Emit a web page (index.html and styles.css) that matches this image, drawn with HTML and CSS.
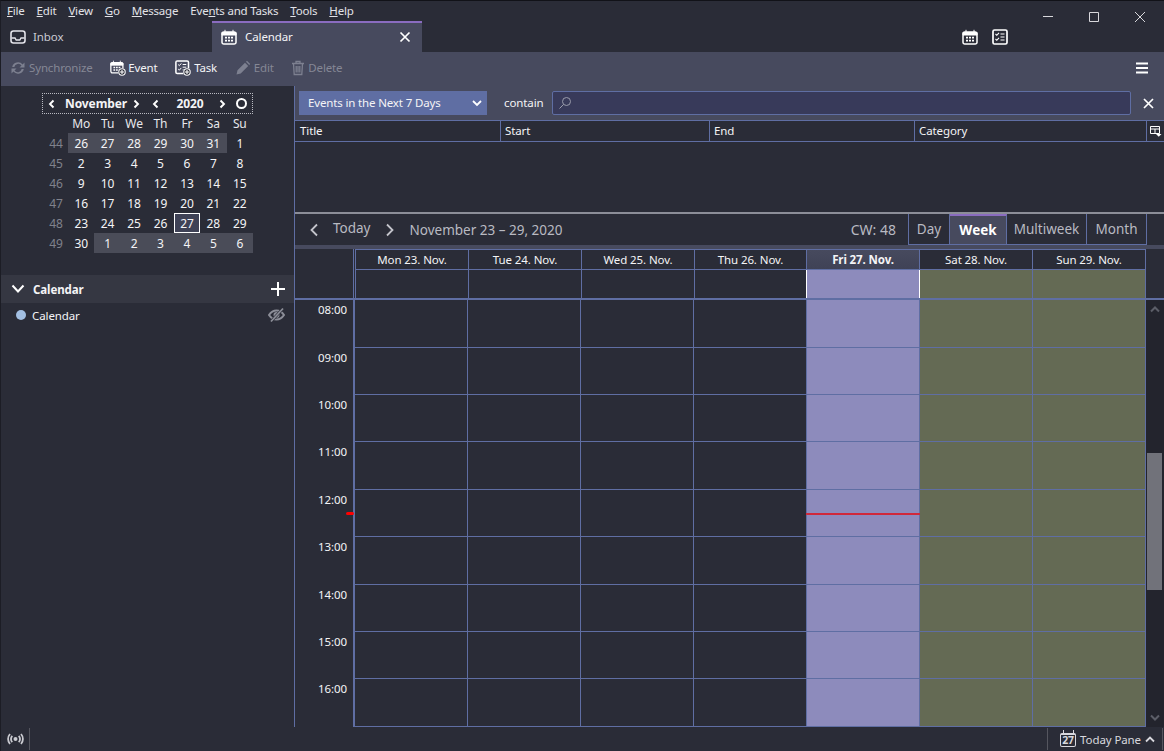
FILE: index.html
```html
<!DOCTYPE html>
<html lang="en">
<head>
  <meta charset="UTF-8">
  <title>Calendar</title>
  <link rel="stylesheet" href="styles.css">
</head>
<body>
  <div class="titlebar">
    <div class="menubar">
      <span><u>F</u>ile</span>
      <span><u>E</u>dit</span>
      <span><u>V</u>iew</span>
      <span><u>G</u>o</span>
      <span><u>M</u>essage</span>
      <span>Eve<u>n</u>ts and Tasks</span>
      <span><u>T</u>ools</span>
      <span><u>H</u>elp</span>
      <div class="window-btns">
        <svg width="12" height="12" viewBox="0 0 12 12"><path d="M1 5.500h10" stroke="#d8d8dc" fill="none"/></svg>
        <svg width="12" height="12" viewBox="0 0 12 12"><path d="M1.500 1.500h9v9h-9z" stroke="#d8d8dc" fill="none"/></svg>
        <svg width="12" height="12" viewBox="0 0 12 12"><path d="M1 1l10 10M11 1L1 11" stroke="#d8d8dc" fill="none"/></svg>
      </div>
    </div>
    <div class="tabbar">
      <div class="tab">
        <svg width="16" height="16" viewBox="0 0 16 16"><rect x="1" y="2" width="14" height="12" rx="2.500" fill="none" stroke="#e4e4ea" stroke-width="1.600"/><path d="M1.500 9h3.500l1.200 2h3.600L11 9h3.500" fill="none" stroke="#e4e4ea" stroke-width="1.400"/></svg>
        <span>Inbox</span>
      </div>
      <div class="tab tab-active">
        <svg width="16" height="16" viewBox="0 0 16 16"><use href="#ic-cal"/></svg>
        <span>Calendar</span>
        <svg class="tab-close" width="12" height="12" viewBox="0 0 12 12"><path d="M1.500 1.500l9 9M10.500 1.500l-9 9" stroke="#fff" stroke-width="1.700" fill="none"/></svg>
      </div>
      <div class="tab-icons">
        <svg width="16" height="16" viewBox="0 0 16 16"><use href="#ic-cal"/></svg>
        <svg width="16" height="16" viewBox="0 0 16 16"><use href="#ic-task"/></svg>
      </div>
    </div>
  </div>

  <div class="toolbar">
    <div class="tool disabled">
      <svg width="16" height="16" viewBox="0 0 16 16"><path d="M2.200 7a6 6 0 0 1 10.400-2.600L14.500 2.500v5h-5l2-2A4 4 0 0 0 4.300 7zM13.800 9a6 6 0 0 1-10.400 2.600L1.500 13.500v-5h5l-2 2a4 4 0 0 0 7.200-1.500z" fill="#7d8090"/></svg>
      <span>Synchronize</span>
    </div>
    <div class="tool tool-new">
      <svg width="16" height="16" viewBox="0 0 16 16"><g transform="scale(.86)"><use href="#ic-cal"/></g><circle cx="12" cy="12" r="4" fill="#474a5e"/><circle cx="12" cy="12" r="3.200" fill="#2a2c37" stroke="#fff" stroke-width="1.100"/><path d="M12 10v4M10 12h4" stroke="#fff" stroke-width="1.100"/></svg>
      <span>Event</span>
    </div>
    <div class="tool">
      <svg width="16" height="16" viewBox="0 0 16 16"><g transform="scale(.9)"><use href="#ic-task"/></g><circle cx="12" cy="12" r="4" fill="#474a5e"/><circle cx="12" cy="12" r="3.200" fill="#2a2c37" stroke="#fff" stroke-width="1.100"/><path d="M12 10v4M10 12h4" stroke="#fff" stroke-width="1.100"/></svg>
      <span>Task</span>
    </div>
    <div class="tool disabled">
      <svg width="16" height="16" viewBox="0 0 16 16"><path d="M1.500 14.500l1-4.200 7.500-7.500 3.200 3.200-7.500 7.500zM11 1.800l1-1 3.200 3.200-1 1z" fill="#7d8090"/></svg>
      <span>Edit</span>
    </div>
    <div class="tool disabled">
      <svg width="14" height="16" viewBox="0 0 14 16"><path d="M1 3.500h12M5 3V1.500h4V3M2.500 3.500l.7 11h7.600l.7-11M5.200 6v6.500M7 6v6.500M8.800 6v6.500" fill="none" stroke="#7d8090" stroke-width="1.300"/></svg>
      <span>Delete</span>
    </div>
    <svg class="hamburger" width="14" height="12" viewBox="0 0 14 12"><path d="M1 1.500h12M1 6h12M1 10.500h12" stroke="#fff" stroke-width="2"/></svg>
  </div>

  <div class="main">
    <aside class="sidebar">
      <div class="minimonth">
        <div class="mm-head">
          <svg class="mm-prev" width="10" height="10" viewBox="0 0 10 10"><path d="M6.500 1.500L3 5l3.500 3.500" fill="none" stroke="#fff" stroke-width="1.900"/></svg>
          <b class="mm-month">November</b>
          <svg class="mm-next" width="10" height="10" viewBox="0 0 10 10"><path d="M3.500 1.500L7 5 3.500 8.500" fill="none" stroke="#fff" stroke-width="1.900"/></svg>
          <svg class="mm-prev2" width="10" height="10" viewBox="0 0 10 10"><path d="M6.500 1.500L3 5l3.500 3.500" fill="none" stroke="#fff" stroke-width="1.900"/></svg>
          <b class="mm-year">2020</b>
          <svg class="mm-next2" width="10" height="10" viewBox="0 0 10 10"><path d="M3.500 1.500L7 5 3.500 8.500" fill="none" stroke="#fff" stroke-width="1.900"/></svg>
          <span class="mm-today"></span>
        </div>
        <div class="mm-grid" id="mm-grid"></div>
      </div>
      <div class="cal-head">
        <svg width="14" height="10" viewBox="0 0 14 10"><path d="M1.500 1.500L7 7.500l5.500-6" fill="none" stroke="#fff" stroke-width="2"/></svg>
        <b>Calendar</b>
        <svg class="cal-add" width="14" height="14" viewBox="0 0 14 14"><path d="M7 0v14M0 7h14" stroke="#fff" stroke-width="2"/></svg>
      </div>
      <div class="cal-row">
        <i class="cal-dot"></i>
        <span>Calendar</span>
        <svg class="cal-eye" width="17" height="16" viewBox="0 0 17 16"><path d="M1 8c2-3 4.500-4.500 7.500-4.500S14 5 16 8c-2 3-4.500 4.500-7.500 4.500S3 11 1 8z" fill="none" stroke="#8c8e98" stroke-width="2"/><circle cx="8.500" cy="8" r="3" fill="#8c8e98"/><path d="M3 14.500L15 1.500" stroke="#2a2c37" stroke-width="2.800"/><path d="M3 14.500L15 1.500" stroke="#8c8e98" stroke-width="1.800"/></svg>
      </div>
    </aside>

    <section class="content">
      <div class="filterbar">
        <div class="filter-select">
          <span>Events in the Next 7 Days</span>
          <svg width="10" height="7" viewBox="0 0 10 7"><path d="M1 1l4 4 4-4" fill="none" stroke="#fff" stroke-width="1.800"/></svg>
        </div>
        <span class="filter-label">contain</span>
        <div class="filter-search">
          <svg width="14" height="14" viewBox="0 0 14 14"><circle cx="8.500" cy="5.500" r="4" fill="none" stroke="#9a9cab"/><path d="M5.500 8.500L1.500 12.500" stroke="#9a9cab"/></svg>
        </div>
        <svg class="filter-close" width="11" height="11" viewBox="0 0 11 11"><path d="M1 1l9 9M10 1l-9 9" stroke="#fff" stroke-width="1.700"/></svg>
      </div>
      <div class="tree-head">
        <span class="col-title">Title</span>
        <span>Start</span>
        <span>End</span>
        <span>Category</span>
        <span class="col-pick">
          <svg width="12" height="11" viewBox="0 0 12 11"><path d="M.5 .5h9v7h-9zM.5 3h9M5 3v4.500" fill="none" stroke="#fff"/><path d="M6 8h5.500L8.750 10.800z" fill="#fff"/></svg>
        </span>
      </div>
      <div class="tree-body"></div>

      <div class="viewnav">
        <svg class="nav-arrow" width="10" height="14" viewBox="0 0 10 14"><path d="M8 1.500L2.500 7 8 12.500" fill="none" stroke="#c4c5cc" stroke-width="1.800"/></svg>
        <span class="nav-today">Today</span>
        <svg class="nav-arrow nav-next" width="10" height="14" viewBox="0 0 10 14"><path d="M2 1.500L7.500 7 2 12.500" fill="none" stroke="#c4c5cc" stroke-width="1.800"/></svg>
        <span class="nav-range">November 23 – 29, 2020</span>
        <span class="nav-cw">CW: 48</span>
        <div class="view-tabs">
          <span class="view-tab">Day</span>
          <span class="view-tab view-tab-on">Week</span>
          <span class="view-tab">Multiweek</span>
          <span class="view-tab">Month</span>
        </div>
      </div>

      <div class="week">
        <div class="week-head">
          <div class="week-corner"></div>
          <div class="day-heads" id="day-heads"></div>
        </div>
        <div class="week-body">
          <div class="times" id="times"></div>
          <div class="grid-wrap">
            <div class="day-cols" id="day-cols"></div>
            <i class="now-line"></i>
          </div>
          <div class="scrollbar">
            <svg class="scroll-btn" width="10" height="7" viewBox="0 0 10 7"><path d="M1 5.500L5 1.500l4 4" fill="none" stroke="#5c5e68" stroke-width="2"/></svg>
            <div class="scroll-track"><div class="scroll-thumb"></div></div>
            <svg class="scroll-btn" width="10" height="7" viewBox="0 0 10 7"><path d="M1 1.500L5 5.500l4-4" fill="none" stroke="#5c5e68" stroke-width="2"/></svg>
          </div>
        </div>
      </div>
    </section>
  </div>

  <footer class="statusbar">
    <svg class="status-radio" width="17" height="12" viewBox="0 0 17 12"><circle cx="8.500" cy="6" r="2" fill="#c9cad0"/><path d="M5.300 2.800a4.500 4.500 0 0 0 0 6.400M11.700 2.800a4.500 4.500 0 0 1 0 6.400M3 1a7.500 7.500 0 0 0 0 10M14 1a7.500 7.500 0 0 1 0 10" fill="none" stroke="#c9cad0" stroke-width="1.800"/></svg>
    <i class="status-sep"></i>
    <i class="status-sep status-sep-right"></i>
    <div class="status-today">
      <span class="today-icon">27</span>
      <span class="today-label">Today Pane</span>
      <svg width="10" height="7" viewBox="0 0 10 7"><path d="M1 5.500L5 1.500l4 4" fill="none" stroke="#d8d8de" stroke-width="1.800"/></svg>
    </div>
    <i class="status-sep"></i>
  </footer>

  <svg class="defs" width="0" height="0">
    <defs>
      <g id="ic-cal">
        <path d="M2.800 3h10.400A1.800 1.800 0 0 1 15 4.800v8.400a1.800 1.800 0 0 1-1.800 1.800H2.800A1.800 1.800 0 0 1 1 13.200V4.800A1.800 1.800 0 0 1 2.800 3z" fill="none" stroke="#fff" stroke-width="1.500"/>
        <path d="M1 3.500h14v2.500H1zM4 .8v3M12 .8v3" fill="#fff" stroke="#fff" stroke-width="1"/>
        <path d="M4 7.800h2v1.800H4zM7 7.800h2v1.800H7zM10 7.800h2v1.800h-2zM4 10.800h2v1.800H4zM7 10.800h2v1.800H7zM10 10.800h2v1.800h-2z" fill="#fff"/>
      </g>
      <g id="ic-task">
        <rect x="1" y="1" width="14" height="14" rx="1.500" fill="none" stroke="#fff" stroke-width="1.700"/>
        <path d="M3.500 5l1.300 1.300L7 3.800M3.500 10l1.300 1.300L7 8.800" fill="none" stroke="#fff" stroke-width="1.100"/>
        <path d="M8.500 5h4M8.500 8h4M8.500 11h4" stroke="#fff" stroke-width="1.100"/>
      </g>
    </defs>
  </svg>

  <script>
    // mini month
    const weeks = [
      [44, 26, 27, 28, 29, 30, 31, 1],
      [45, 2, 3, 4, 5, 6, 7, 8],
      [46, 9, 10, 11, 12, 13, 14, 15],
      [47, 16, 17, 18, 19, 20, 21, 22],
      [48, 23, 24, 25, 26, 27, 28, 29],
      [49, 30, 1, 2, 3, 4, 5, 6]
    ];
    const grid = document.getElementById('mm-grid');
    let html = '<span></span>';
    ['Mo', 'Tu', 'We', 'Th', 'Fr', 'Sa', 'Su'].forEach(d => {
      html += '<span class="mm-dow">' + d + '</span>';
    });
    weeks.forEach((w, row) => {
      w.forEach((n, i) => {
        let cls = i === 0 ? 'mm-week' : 'mm-day';
        if (i > 0 && ((row === 0 && n > 20) || (row === 5 && n < 20))) cls += ' mm-other';
        if (row === 4 && n === 27) cls += ' mm-now';
        html += '<span class="' + cls + '">' + n + '</span>';
      });
    });
    grid.innerHTML = html;

    // week view
    const days = ['Mon 23. Nov.', 'Tue 24. Nov.', 'Wed 25. Nov.', 'Thu 26. Nov.', 'Fri 27. Nov.', 'Sat 28. Nov.', 'Sun 29. Nov.'];
    const hours = ['08:00', '09:00', '10:00', '11:00', '12:00', '13:00', '14:00', '15:00', '16:00'];
    const kind = i => (i === 4 ? ' is-today' : i > 4 ? ' is-weekend' : '');

    document.getElementById('day-heads').innerHTML = days.map((d, i) =>
      '<div class="day-head' + kind(i) + '"><div class="day-name">' + d + '</div><div class="day-allday"></div></div>'
    ).join('');

    document.getElementById('times').innerHTML = hours.map(h =>
      '<div class="time">' + h + '</div>'
    ).join('') + '<i class="now-mark"></i>';

    document.getElementById('day-cols').innerHTML = days.map((d, i) =>
      '<div class="day-col' + kind(i) + '">' + hours.map(() => '<div class="slot"></div>').join('') + '</div>'
    ).join('');
  </script>
</body>
</html>
```

FILE: styles.css
```css
* {
  box-sizing: border-box;
}

html, body {
  height: 100%;
}

body {
  margin: 0;
  height: 751px;
  overflow: hidden;
  display: flex;
  flex-direction: column;
  background-color: #2a2c37;
  color: #f4f4f6;
  font-family: "Noto Sans", "Open Sans", sans-serif;
  font-size: 11.5px;
  letter-spacing: -0.1px;
  border-top: 1px solid #111218;
  border-left: 1px solid #1c1d25;
}

.defs {
  position: absolute;
}

svg {
  display: block;
  flex: none;
}

/* title bar */
.titlebar {
  height: 51px;
  flex: none;
  background-color: #2a2c37;
}

.menubar {
  height: 20px;
  display: flex;
  align-items: center;
  gap: 12px;
  padding-left: 6px;
  color: #e2e3e8;
  letter-spacing: -0.2px;
}

.menubar span {
  margin-top: -2px;
}

.menubar u {
  text-underline-offset: 1px;
}

.window-btns {
  margin-left: auto;
  display: flex;
  gap: 34px;
  padding-top: 12px;
  padding-right: 18px;
}

.tabbar {
  height: 31px;
  display: flex;
  align-items: center;
}

.tab {
  height: 31px;
  width: 211px;
  display: flex;
  align-items: center;
  gap: 7px;
  padding-left: 9px;
  color: #c9cad2;
}

.tab-active {
  width: 210px;
  border-top: 2px solid #8a6cc0;
  padding-bottom: 2px;
  background-color: #474a5e;
  color: #f4f4f6;
  gap: 8px;
}

.tab-close {
  margin-left: auto;
  margin-right: 11px;
}

.tab-icons {
  margin-left: 540px;
  display: flex;
  gap: 14px;
}

/* toolbar */
.toolbar {
  height: 34px;
  flex: none;
  display: flex;
  align-items: center;
  background-color: #474a5e;
  padding: 0 0 2px 9px;
  gap: 17.6px;
  letter-spacing: -0.15px;
}

.tool {
  display: flex;
  align-items: center;
  gap: 3px;
}

.tool span {
  margin-top: -1px;
}

.tool-new {
  gap: 2px;
}

.tool.disabled {
  color: #858795;
}

.hamburger {
  margin-left: auto;
  margin-right: 15px;
}

/* main area */
.main {
  flex: 1;
  display: flex;
  min-height: 0;
}

.sidebar {
  width: 294px;
  flex: none;
  border-right: 1px solid #5f6ea3;
  background-color: #2a2c37;
}

.minimonth {
  width: 211px;
  margin: 7px 0 0 41px;
}

.mm-head {
  height: 21px;
  display: flex;
  align-items: center;
  border: 1px dotted #b9bac2;
  padding-left: 4px;
  font-size: 12px;
}

.mm-month {
  margin-left: 8px;
  width: 60px;
  text-align: center;
}

.mm-next {
  margin-left: 6px;
}

.mm-prev2 {
  margin-left: 10px;
}

.mm-year {
  margin-left: 15px;
  width: 28px;
  text-align: center;
}

.mm-next2 {
  margin-left: 13px;
}

.mm-today {
  width: 11px;
  height: 11px;
  margin-left: 9px;
  border: 2.5px solid #fff;
  border-radius: 50%;
}

.mm-grid {
  display: grid;
  grid-template-columns: 26px repeat(7, 1fr);
  grid-template-rows: 19px repeat(6, 20px);
  font-size: 12px;
}

.mm-grid span {
  display: flex;
  align-items: center;
  justify-content: center;
}

.mm-grid .mm-dow {
  color: #e8e8ec;
}

.mm-grid .mm-week {
  color: #80828c;
  padding-left: 2px;
}

.mm-grid .mm-other {
  background-color: #4a4c58;
}

.mm-grid .mm-now {
  background-color: #3f4256;
  border: 1px solid #fff;
}

.cal-head {
  margin-top: 22px;
  height: 28px;
  display: flex;
  align-items: center;
  gap: 8px;
  padding: 0 9px 0 10px;
  background-color: #353742;
}

.cal-add {
  margin-left: auto;
}

.cal-row {
  height: 24px;
  display: flex;
  align-items: center;
  padding: 0 9px 0 15px;
  gap: 6px;
}

.cal-dot {
  width: 10px;
  height: 10px;
  border-radius: 50%;
  background-color: #a2bfe2;
}

.cal-eye {
  margin-left: auto;
}

/* filter + list */
.content {
  flex: 1;
  min-width: 0;
  display: flex;
  flex-direction: column;
}

.filterbar {
  height: 35px;
  flex: none;
  display: flex;
  align-items: center;
  background-color: #474a5e;
  padding-left: 4px;
  border-bottom: 1px solid #5f6ea3;
}

.filter-select {
  width: 188px;
  height: 24px;
  display: flex;
  align-items: center;
  justify-content: space-between;
  padding: 0 5px 0 9px;
  background-color: #5f6ea3;
  letter-spacing: -0.15px;
}

.filter-select span {
  margin-top: -1px;
}

.filter-label {
  width: 48px;
  margin: -1px 0 0 17px;
}

.filter-search {
  width: 579px;
  height: 24px;
  display: flex;
  align-items: center;
  padding-left: 5px;
  background-color: #383a5a;
  border: 1px solid #5f6ea3;
  border-radius: 2px;
}

.filter-close {
  margin-left: 12px;
}

.tree-head {
  height: 21px;
  flex: none;
  display: grid;
  grid-template-columns: 206px 209px 205px 232px 1fr;
  border-bottom: 1px solid #5f6ea3;
}

.tree-head span {
  display: flex;
  align-items: center;
  padding: 0 0 2px 4px;
  border-right: 1px solid #5f6ea3;
}

.tree-head .col-title {
  padding-left: 5px;
}

.tree-head .col-pick {
  border-right: 0;
  padding: 0 0 0 3px;
}

.tree-body {
  height: 72px;
  flex: none;
  border-bottom: 2px solid #8c8e98;
}

.viewnav {
  height: 31px;
  flex: none;
  display: flex;
  align-items: center;
  color: #b9bac2;
  font-size: 13.5px;
  letter-spacing: 0;
  padding-left: 14px;
}

.nav-today {
  margin: -3px 0 0 14px;
}

.nav-next {
  margin-left: 14px;
}

.nav-range {
  margin-left: 15px;
}

.nav-cw {
  margin-left: auto;
  margin-right: 12px;
  font-size: 14px;
}

.view-tabs {
  display: grid;
  grid-template-columns: 42px 57px 80px 60px;
  align-self: stretch;
  margin-right: 17px;
}

.view-tab {
  display: flex;
  align-items: center;
  justify-content: center;
  border-right: 1px solid #5f6ea3;
  border-bottom: 1px solid #5f6ea3;
}

.view-tab:first-child {
  border-left: 1px solid #5f6ea3;
}

.view-tab-on {
  background-color: #474a5e;
  color: #fff;
  font-weight: 700;
  border-top: 2px solid #8a6cc0;
}

/* week view */
.week {
  flex: 1;
  min-height: 0;
  display: flex;
  flex-direction: column;
  border-top: 4px solid #474a5e;
}

.week-head {
  flex: none;
  height: 51px;
  display: flex;
  border-bottom: 2px solid #5f6ea3;
}

.week-corner {
  width: 59px;
  flex: none;
  margin-right: 1px;
  border-right: 1px solid #5f6ea3;
}

.day-heads {
  display: flex;
  border-left: 1px solid #5f6ea3;
  border-top: 1px solid #5f6ea3;
}

.day-head {
  width: 113px;
  display: flex;
  flex-direction: column;
  border-right: 1px solid #5f6ea3;
}

.day-head:nth-child(4) {
  width: 112px;
}

.day-name {
  height: 20px;
  display: flex;
  align-items: center;
  justify-content: center;
  border-bottom: 1px solid #5f6ea3;
}

.day-allday {
  flex: 1;
}

.day-head.is-today .day-name {
  font-weight: 700;
  background-image: linear-gradient(#474a5e, #3f4256);
}

.day-head.is-today .day-allday {
  background-color: #8d8bbc;
  border-left: 1px solid #fff;
  border-right: 1px solid #fff;
  margin: 0 -1px;
}

.day-head.is-weekend .day-allday {
  background-color: #646a54;
}

.week-body {
  flex: 1;
  min-height: 0;
  display: flex;
  overflow: hidden;
}

.times {
  width: 59px;
  flex: none;
  position: relative;
  border-right: 1px solid #5f6ea3;
}

.time {
  height: 47.4px;
  padding: 2.300px 6px 0 0;
  text-align: right;
}

.now-mark {
  position: absolute;
  right: -1px;
  top: 212px;
  width: 8px;
  height: 3px;
  background-color: #f00;
  border-radius: 2px;
}

.grid-wrap {
  flex: none;
  width: 792px;
  position: relative;
  overflow: hidden;
}

.day-cols {
  display: flex;
  border-bottom: 1px solid #5f6ea3;
  height: 100%;
  border-left: 1px solid #5f6ea3;
  overflow: hidden;
}

.day-col {
  width: 113px;
  flex: none;
  padding-top: 0.2px;
  border-right: 1px solid #5f6ea3;
}

.day-col.is-today {
  background-color: #8d8bbc;
}

.day-col.is-weekend {
  background-color: #646a54;
}

.slot {
  height: 47.4px;
  border-bottom: 1px solid #5f6ea3;
}

.now-line {
  position: absolute;
  left: 452px;
  top: 213px;
  width: 114px;
  height: 2px;
  background-color: #d0283a;
}

.scrollbar {
  flex: 1;
  display: flex;
  flex-direction: column;
  background-color: #23242d;
  padding: 6px 0;
}

.scroll-btn {
  margin-left: 4px;
}

.scroll-track {
  flex: 1;
  padding: 140px 0 0 1px;
}

.scroll-thumb {
  width: 15px;
  height: 137px;
  background-color: #71727a;
}

/* status bar */
.statusbar {
  height: 24px;
  flex: none;
  display: flex;
  align-items: center;
  background-color: #2a2c37;
  padding: 0 1px 0 6px;
  color: #d8d8de;
}

.status-sep {
  width: 1px;
  height: 22px;
  background-color: #55565f;
  margin-left: 5px;
}

.status-sep-right {
  margin-left: auto;
  margin-right: 12px;
}

.status-today {
  display: flex;
  align-items: center;
  gap: 4px;
  padding-right: 2px;
}

.today-icon {
  position: relative;
  width: 16px;
  height: 14px;
  margin-top: 2px;
  border: 1.5px solid #d8d8de;
  border-top-width: 2.5px;
  border-radius: 2px;
  font-size: 10.5px;
  font-weight: 700;
  line-height: 10px;
  text-align: center;
}

.today-icon::before {
  content: "";
  position: absolute;
  top: -5px;
  left: 2px;
  width: 9px;
  height: 3px;
  border-left: 1.5px solid #d8d8de;
  border-right: 1.5px solid #d8d8de;
}
```
